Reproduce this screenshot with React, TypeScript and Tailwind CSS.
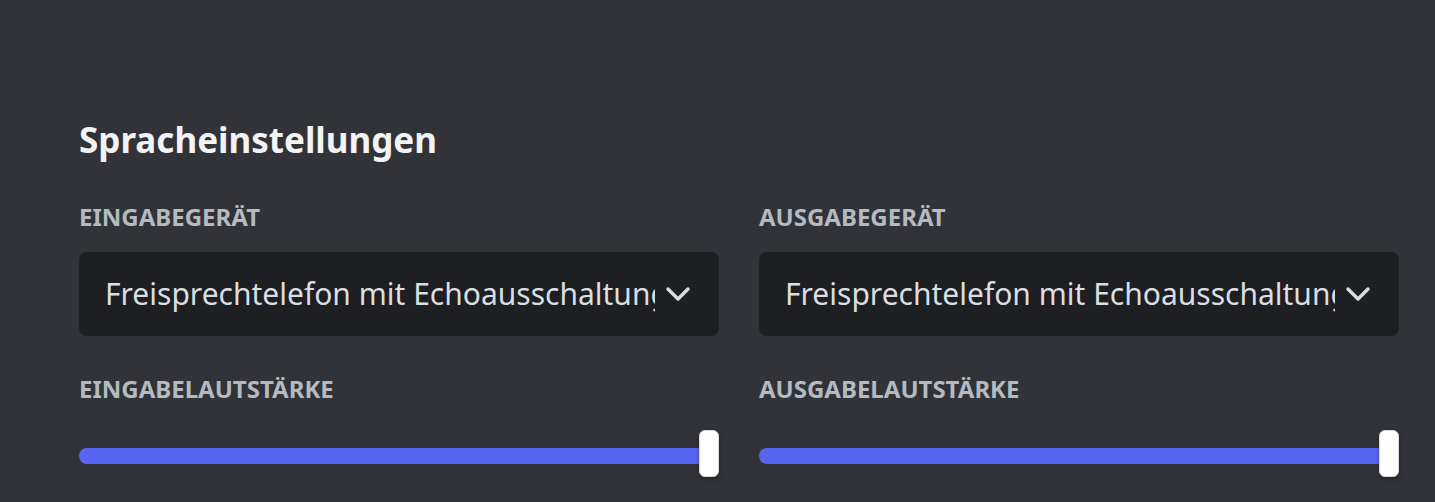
const columns = [
  { device: "Eingabegerät", volume: "Eingabelautstärke" },
  { device: "Ausgabegerät", volume: "Ausgabelautstärke" },
];

const deviceName = "Freisprechtelefon mit Echoausschaltung";

function Chevron() {
  return (
    <svg width="26" height="16" viewBox="0 0 26 16" fill="none" className="shrink-0 text-[#dbdee1]">
      <path d="M3 3 L13 13 L23 3" stroke="currentColor" strokeWidth="3.4" strokeLinecap="round" strokeLinejoin="round" />
    </svg>
  );
}

function DeviceSelect({ value }: { value: string }) {
  return (
    <div className="flex h-[84px] items-center gap-[10px] rounded-[8px] bg-[#1e1f22] pl-[26px] pr-[28px]">
      <div className="min-w-0 flex-1 overflow-hidden whitespace-nowrap text-[30px] leading-[40px] text-[#dbdee1]">
        {value}
      </div>
      <Chevron />
    </div>
  );
}

function VolumeSlider() {
  return (
    <div className="relative flex h-[48px] items-center">
      <div className="h-[16px] w-full rounded-full bg-[#5865f2]" />
      <div className="absolute right-0 top-[-2px] h-[47px] w-[20px] rounded-[6px] border border-[#d8d9de] bg-white shadow-[0_2px_4px_rgba(0,0,0,0.35)]" />
    </div>
  );
}

export default function App() {
  return (
    <div
      className="h-[502px] w-full overflow-hidden bg-[#313338] pl-[79px] pr-[36px] pt-[114px]"
      style={{ fontFamily: '"Noto Sans", sans-serif' }}
    >
      <h2 className="text-[35px] font-bold leading-[52px] text-[#f2f3f5]">Spracheinstellungen</h2>
      <div className="mt-[37px] grid grid-cols-2 gap-x-[40px]">
        {columns.map((col) => (
          <div key={col.device} className="flex flex-col">
            <h3 className="text-[24px] font-bold uppercase leading-[28px] text-[#b5bac1]">{col.device}</h3>
            <div className="mt-[21px]">
              <DeviceSelect value={deviceName} />
            </div>
            <h3 className="mt-[39px] text-[24px] font-bold uppercase leading-[28px] text-[#b5bac1]">{col.volume}</h3>
            <div className="mt-[29px]">
              <VolumeSlider />
            </div>
          </div>
        ))}
      </div>
    </div>
  );
}
